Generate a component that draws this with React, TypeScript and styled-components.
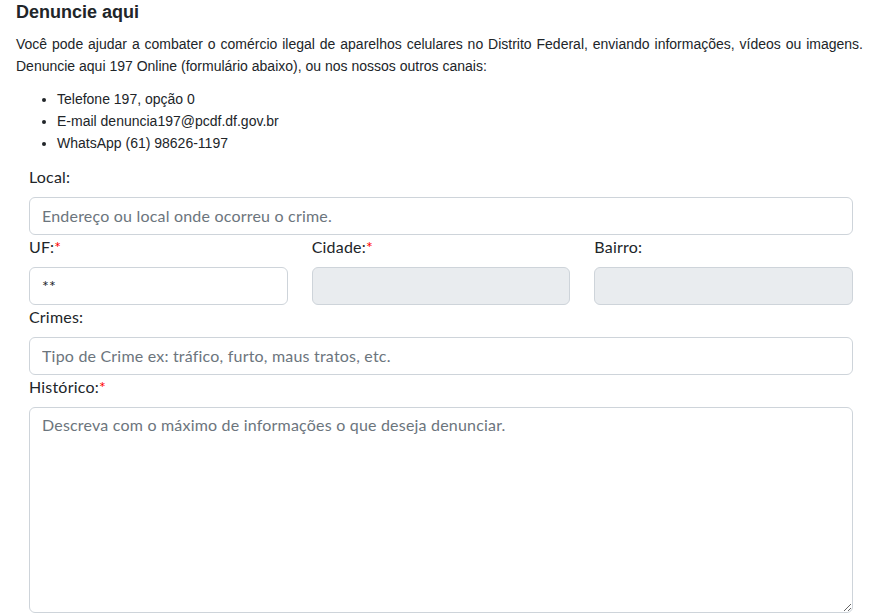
import { createGlobalStyle, styled } from "styled-components";

const Global = createGlobalStyle`
  body {
    margin: 0;
    background: #fff;
    color: #212529;
    font-family: "Liberation Sans", Arial, sans-serif;
  }
  * { box-sizing: border-box; }
`;

const Page = styled.div`
  width: 886px;
  padding: 0 23px 0 16px;
`;

const Title = styled.h4`
  margin: 0 0 9px;
  font-size: 18px;
  line-height: 24px;
  font-weight: 700;
  color: #212529;
`;

const Intro = styled.p`
  margin: 0;
  font-size: 14px;
  line-height: 22px;
  text-align: justify;
`;

const Channels = styled.ul`
  margin: 11px 0 11px;
  padding-left: 41px;
  font-size: 14px;
  line-height: 22px;
`;

const Form = styled.form`
  margin: 0 10px 0 13px;
  font-family: Lato, "Open Sans", sans-serif;
  letter-spacing: 0.2px;
`;

const Row = styled.div`
  display: grid;
  grid-template-columns: repeat(3, 1fr);
  column-gap: 24px;
`;

const Field = styled.div``;

const Label = styled.label`
  display: block;
  margin-bottom: 8px;
  padding-bottom: 1px;
  font-size: 16px;
  line-height: 23px;
  color: #212529;
`;

const Req = styled.span`
  color: #ff0000;
`;

const Input = styled.input`
  display: block;
  width: 100%;
  height: 38px;
  padding: 5px 12px 7px;
  font-family: inherit;
  letter-spacing: inherit;
  font-size: 16px;
  line-height: 24px;
  color: #212529;
  background: #fff;
  border: 1px solid #ced4da;
  border-radius: 6px;
  outline: none;
  &::placeholder { color: #6c757d; }
  &:disabled { background: #e9ecef; }
`;

const TextArea = styled.textarea`
  display: block;
  width: 100%;
  height: 206px;
  padding: 5px 12px 7px;
  font-family: inherit;
  letter-spacing: inherit;
  font-size: 16px;
  line-height: 24px;
  color: #212529;
  border: 1px solid #ced4da;
  border-radius: 6px;
  outline: none;
  resize: vertical;
  &::placeholder { color: #6c757d; }
`;

export default function App() {
  return (
    <Page>
      <Global />
      <Title>Denuncie aqui</Title>
      <Intro>
        Você pode ajudar a combater o comércio ilegal de aparelhos celulares no Distrito Federal,
        enviando informações, vídeos ou imagens. Denuncie aqui 197 Online (formulário abaixo), ou nos
        nossos outros canais:
      </Intro>
      <Channels>
        <li>Telefone 197, opção 0</li>
        <li>E-mail denuncia197@pcdf.df.gov.br</li>
        <li>WhatsApp (61) 98626-1197</li>
      </Channels>
      <Form>
        <Field>
          <Label>Local:</Label>
          <Input placeholder="Endereço ou local onde ocorreu o crime." />
        </Field>
        <Row>
          <Field>
            <Label>UF:<Req>*</Req></Label>
            <Input defaultValue="**" />
          </Field>
          <Field>
            <Label>Cidade:<Req>*</Req></Label>
            <Input disabled />
          </Field>
          <Field>
            <Label>Bairro:</Label>
            <Input disabled />
          </Field>
        </Row>
        <Field>
          <Label>Crimes:</Label>
          <Input placeholder="Tipo de Crime ex: tráfico, furto, maus tratos, etc." />
        </Field>
        <Field>
          <Label>Histórico:<Req>*</Req></Label>
          <TextArea placeholder="Descreva com o máximo de informações o que deseja denunciar." />
        </Field>
      </Form>
    </Page>
  );
}
